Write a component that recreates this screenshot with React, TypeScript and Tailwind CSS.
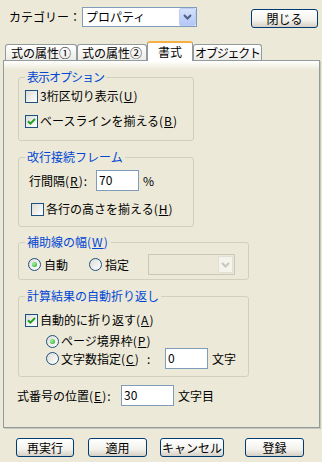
import React from "react";

function Check({ checked }: { checked?: boolean }) {
  return (
    <span className="w-[13px] h-[13px] shrink-0 border border-[#1C5180] bg-[linear-gradient(135deg,#DCDCD7,#FFFFFF)] flex items-center justify-center">
      {checked && (
        <svg width="9" height="9" viewBox="0 0 9 9">
          <path d="M1 4.2 L3.4 6.6 L8 2" stroke="#21A121" strokeWidth="2" fill="none" />
        </svg>
      )}
    </span>
  );
}

function Radio({ checked }: { checked?: boolean }) {
  return (
    <span className="w-[13px] h-[13px] shrink-0 rounded-full border border-[#1C5180] bg-[linear-gradient(135deg,#DCDCD7,#FFFFFF)] flex items-center justify-center">
      {checked && (
        <span className="w-[5px] h-[5px] rounded-full bg-[radial-gradient(circle_at_35%_35%,#A2F5A2,#21A121)]" />
      )}
    </span>
  );
}

function XPButton({ className, children }: { className?: string; children: React.ReactNode }) {
  return (
    <div
      className={`flex items-center justify-center h-[19px] shrink-0 border border-[#003C74] rounded-[3px] bg-[linear-gradient(#FFFFFF,#F3F2EC_60%,#D6D0C5)] leading-[16px] ${className ?? ""}`}
    >
      {children}
    </div>
  );
}

function Chevron({ color }: { color: string }) {
  return (
    <svg width="9" height="6" viewBox="0 0 9 6">
      <path d="M1 1 L4.5 4.5 L8 1" stroke={color} strokeWidth="2" fill="none" />
    </svg>
  );
}

function Group({
  title,
  className,
  children,
}: {
  title: React.ReactNode;
  className?: string;
  children: React.ReactNode;
}) {
  return (
    <div className={`relative shrink-0 border border-[#D0D0BF] rounded-[3px] ${className ?? ""}`}>
      <span className="absolute -top-[9px] left-[6px] px-[2px] bg-[#ECE9D8] text-[#0046D5] leading-[16px] whitespace-nowrap">
        {title}
      </span>
      {children}
    </div>
  );
}

function U({ children }: { children: React.ReactNode }) {
  return <span className="underline underline-offset-[1px]">{children}</span>;
}

function P({ k }: { k: string }) {
  return (
    <span className="tracking-[1px]">
      (<U>{k}</U>)
    </span>
  );
}

function TextBox({ className, value }: { className?: string; value: string }) {
  return (
    <div
      className={`h-[21px] shrink-0 border border-[#7F9DB9] bg-white pl-[2px] pt-[1px] leading-[16px] ${className ?? ""}`}
    >
      {value}
    </div>
  );
}

export default function App() {
  return (
    <div className="w-[322px] h-[462px] overflow-hidden bg-[#ECE9D8] text-black text-[12px] leading-[16px] font-['Noto_Sans_CJK_JP','Noto_Sans',sans-serif] flex flex-col">
      {/* top row */}
      <div className="h-[41px] shrink-0 flex items-start pt-[7px]">
        <div className="ml-[9px] w-[73px] mt-[2px] whitespace-nowrap">カテゴリー：</div>
        <div className="w-[115px] h-[20px] border border-[#7F9DB9] bg-white flex items-stretch">
          <div className="flex-1 pl-[3px] leading-[18px] whitespace-nowrap">プロパティ</div>
          <div className="w-[17px] rounded-[2px] border border-[#BCCDF6] bg-[linear-gradient(#D6E2FC,#B3C7F6)] flex items-center justify-center">
            <Chevron color="#4D6185" />
          </div>
        </div>
        <XPButton className="ml-[54px] mt-[2px] w-[67px]">閉じる</XPButton>
      </div>

      {/* tabs */}
      <div className="h-[19px] shrink-0 flex items-end pl-[5px]">
        <div className="w-[72px] h-[16px] border border-b-0 border-[#919B9C] rounded-t-[3px] bg-[linear-gradient(#FFFFFF,#ECEBE6)] flex items-center justify-center leading-[15px] whitespace-nowrap">
          式の属性①
        </div>
        <div className="w-[70px] h-[16px] border border-b-0 border-[#919B9C] rounded-t-[3px] bg-[linear-gradient(#FFFFFF,#ECEBE6)] flex items-center justify-center leading-[15px] whitespace-nowrap">
          式の属性②
        </div>
        <div className="relative z-10 -mb-[1px] w-[46px] h-[20px] border-x border-[#919B9C] border-t-[2px] border-t-[#F5B041] rounded-t-[3px] bg-white flex items-center justify-center pb-[1px] whitespace-nowrap">
          書式
        </div>
        <div className="w-[69px] h-[16px] border border-b-0 border-[#919B9C] rounded-t-[3px] bg-[linear-gradient(#FFFFFF,#ECEBE6)] flex items-center justify-center leading-[15px] whitespace-nowrap tracking-[-1.2px]">
          オブジェクト
        </div>
      </div>

      {/* panel */}
      <div className="ml-[3px] w-[317px] h-[368px] shrink-0 border border-[#919B9C] shadow-[1px_1px_0_#C9C7BA] bg-[linear-gradient(#FFFFFF,#ECE9D8_9px)] flex flex-col">
        {/* 表示オプション */}
        <Group
          title={<span className="tracking-[-1px]">表示オプション</span>}
          className="ml-[14px] mt-[16px] w-[176px] h-[64px] pt-[10px] pl-[6px]"
        >
          <div className="flex items-center h-[16px] gap-[2px] whitespace-nowrap">
            <Check />
            <span>
              3桁区切り表示<P k="U" />
            </span>
          </div>
          <div className="flex items-center h-[16px] gap-[2px] mt-[9px] whitespace-nowrap">
            <Check checked />
            <span>
              ベースラインを揃える<P k="B" />
            </span>
          </div>
        </Group>

        {/* 改行接続フレーム */}
        <Group title="改行接続フレーム" className="ml-[14px] mt-[16px] w-[176px] h-[70px] pt-[12px] pl-[10px]">
          <div className="flex items-center h-[21px] whitespace-nowrap">
            <span className="w-[67px] shrink-0">
              行間隔<P k="R" />:
            </span>
            <TextBox className="w-[43px]" value="70" />
            <span className="ml-[4px]">%</span>
          </div>
          <div className="flex items-center h-[16px] gap-[2px] mt-[10px] ml-[2px] whitespace-nowrap">
            <Check />
            <span>
              各行の高さを揃える<P k="H" />
            </span>
          </div>
        </Group>

        {/* 補助線の幅 */}
        <Group
          title={
            <>
              補助線の幅<P k="W" />
            </>
          }
          className="ml-[14px] mt-[15px] w-[231px] h-[38px] pt-[11px] pl-[9px]"
        >
          <div className="flex items-center h-[21px] whitespace-nowrap">
            <Radio checked />
            <span className="ml-[3px] w-[24px]">自動</span>
            <span className="ml-[21px]">
              <Radio />
            </span>
            <span className="ml-[3px] w-[24px]">指定</span>
            <div className="ml-[19px] w-[87px] h-[21px] border border-[#C9C7BA] bg-[#EBE8D8] flex items-stretch p-[1px]">
              <div className="flex-1" />
              <div className="w-[15px] border border-[#E2E0D4] bg-[#F5F4EC] flex items-center justify-center">
                <Chevron color="#C9C7BA" />
              </div>
            </div>
          </div>
        </Group>

        {/* 計算結果の自動折り返し */}
        <Group title="計算結果の自動折り返し" className="ml-[14px] mt-[16px] w-[231px] h-[81px] pt-[15px] pl-[6px]">
          <div className="flex items-center h-[16px] gap-[2px] whitespace-nowrap">
            <Check checked />
            <span>
              自動的に折り返す<P k="A" />
            </span>
          </div>
          <div className="flex items-center h-[14px] gap-[2px] mt-[6px] ml-[21px] whitespace-nowrap">
            <Radio checked />
            <span>
              ページ境界枠<P k="P" />
            </span>
          </div>
          <div className="flex items-center h-[21px] ml-[21px] whitespace-nowrap">
            <Radio />
            <span className="ml-[2px] w-[86px] shrink-0">
              文字数指定<P k="C" />
            </span>
            <span className="w-[18px] shrink-0">:</span>
            <TextBox className="w-[43px]" value="0" />
            <span className="ml-[4px]">文字</span>
          </div>
        </Group>

        {/* 式番号の位置 */}
        <div className="flex items-center h-[21px] mt-[8px] ml-[13px] whitespace-nowrap">
          <span className="w-[104px] shrink-0">
            式番号の位置<P k="E" />:
          </span>
          <TextBox className="w-[53px]" value="30" />
          <span className="ml-[4px]">文字目</span>
        </div>
      </div>

      {/* bottom buttons */}
      <div className="flex items-start mt-[10px]">
        <XPButton className="ml-[16px] w-[58px]">再実行</XPButton>
        <XPButton className="ml-[14px] w-[59px]">適用</XPButton>
        <XPButton className="ml-[13px] w-[64px]">キャンセル</XPButton>
        <XPButton className="ml-[21px] w-[59px]">登録</XPButton>
      </div>
    </div>
  );
}
